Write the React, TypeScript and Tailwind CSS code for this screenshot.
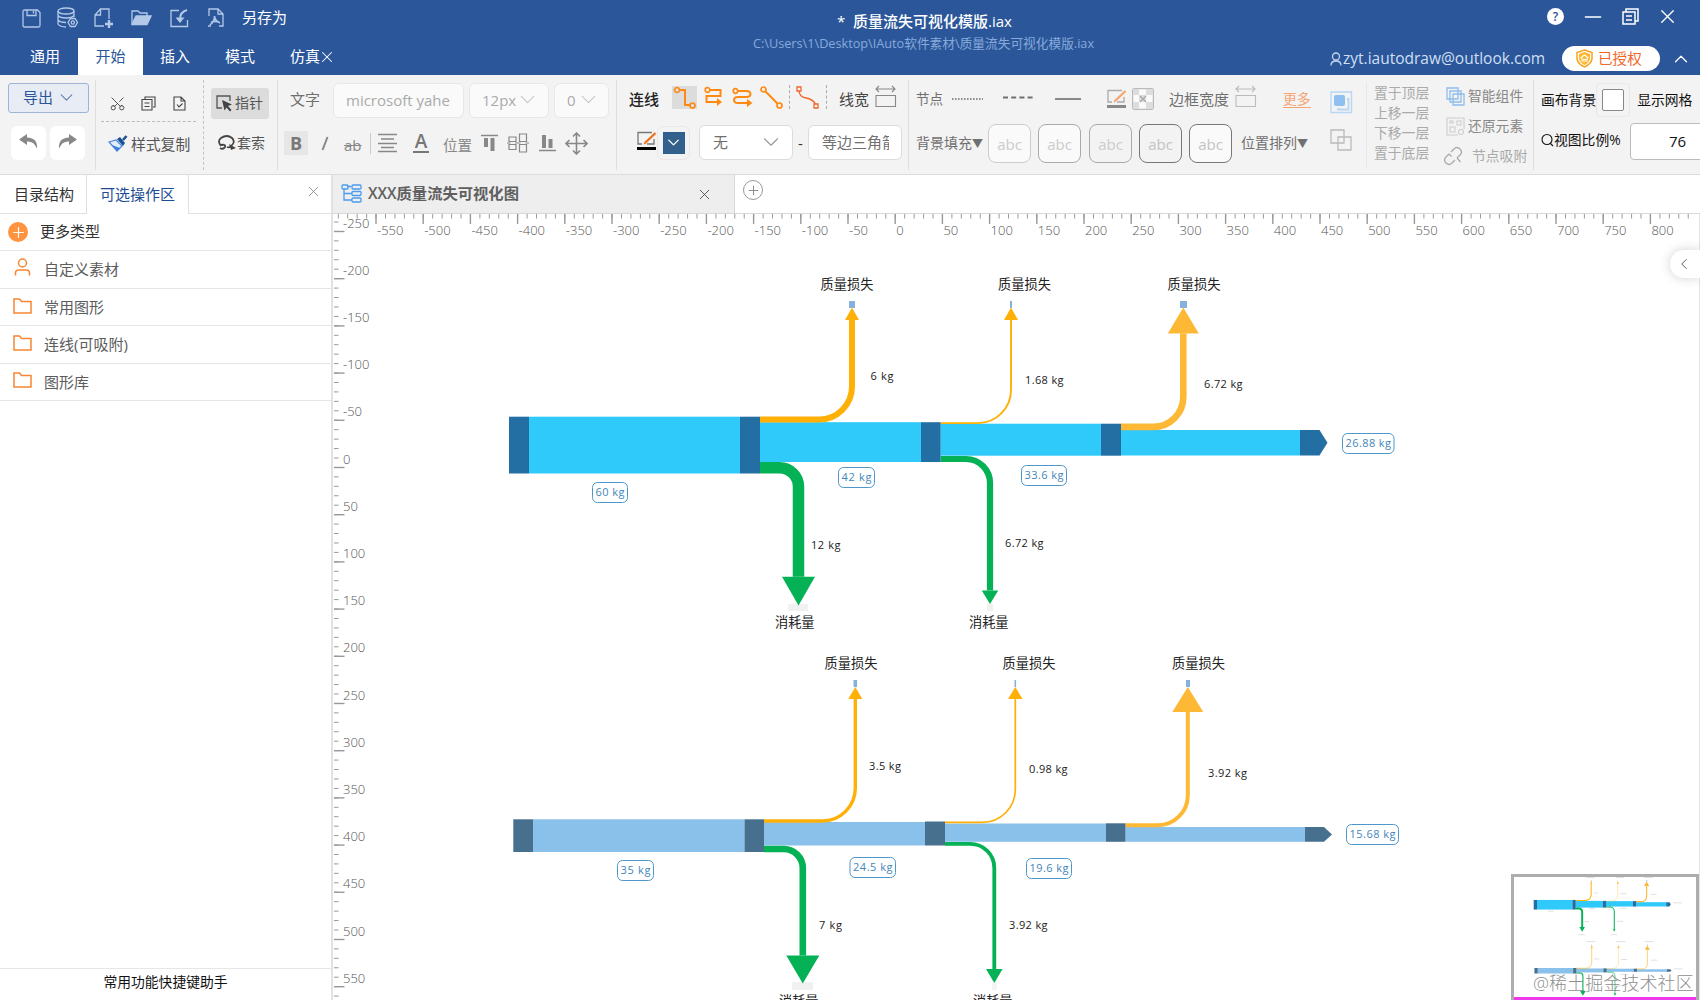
import type { ReactNode } from "react";
import { ChevronDown, ChevronLeft, ChevronUp, Minus, Plus, Scissors, X } from "lucide-react";

interface Stream {
  x: number; // where the stream leaves the bar
  y: number;
  bendX: number;
  radius: number;
  tip: number;
  base: number;
  width: number;
  head: number;
  color: string;
}

interface Label {
  x: number;
  y: number;
  w: number;
  text: string;
}

interface FlowData {
  light: string;
  dark: string;
  bars: number[][];
  nodes: number[][];
  end: string;
  streams: Stream[];
  stubs: number[][];
  titles: Label[];
  values: Label[];
  boxes: Label[];
}

const flows: FlowData[] = [
  {
    light: "#2fc9fa",
    dark: "#236ea3",
    bars: [
      [529, 416.7, 211, 56.8],
      [760, 422.2, 161, 39.8],
      [940.5, 423.7, 160.5, 32],
      [1121, 430, 179, 25.5],
    ],
    nodes: [
      [509, 416.7, 20, 56.8],
      [740, 416.7, 20, 56.8],
      [921, 422.2, 19.6, 39.8],
      [1101, 423.7, 20, 32],
    ],
    end: "M1300 430H1319.5L1327.5 442.7L1319.5 455.5H1300Z",
    streams: [
      { x: 760, y: 419.6, bendX: 852, radius: 33, tip: 307.5, base: 320, width: 6, head: 14, color: "#ffb007" },
      { x: 940.6, y: 423.1, bendX: 1011, radius: 33, tip: 307.5, base: 320, width: 1.9, head: 14, color: "#ffb007" },
      { x: 1121, y: 426.9, bendX: 1183.3, radius: 30, tip: 307.5, base: 333.5, width: 6.6, head: 31, color: "#fdb935" },
      { x: 760, y: 467.7, bendX: 798.5, radius: 19, tip: 605.5, base: 576.7, width: 11.5, head: 33, color: "#04b154" },
      { x: 940.6, y: 459, bendX: 990, radius: 24, tip: 604, base: 590.5, width: 6.2, head: 16.5, color: "#04b154" },
    ],
    stubs: [
      [849, 301, 6, 7],
      [1010, 301, 2, 7],
      [1180, 301, 7, 7],
    ],
    titles: [
      { x: 820.5, y: 284, w: 53, text: "质量损失" },
      { x: 998, y: 284, w: 53, text: "质量损失" },
      { x: 1167.5, y: 284, w: 53, text: "质量损失" },
      { x: 775, y: 622, w: 39.5, text: "消耗量" },
      { x: 969, y: 622, w: 39.5, text: "消耗量" },
    ],
    values: [
      { x: 870.5, y: 376, w: 23, text: "6 kg" },
      { x: 1025, y: 380, w: 38.5, text: "1.68 kg" },
      { x: 1204, y: 384, w: 38.5, text: "6.72 kg" },
      { x: 811, y: 545, w: 29.5, text: "12 kg" },
      { x: 1005, y: 543, w: 38.5, text: "6.72 kg" },
    ],
    boxes: [
      { x: 592.5, y: 482.5, w: 35, text: "60 kg" },
      { x: 838.5, y: 467.5, w: 36, text: "42 kg" },
      { x: 1021.5, y: 465.5, w: 45, text: "33.6 kg" },
      { x: 1342.5, y: 433.5, w: 51.5, text: "26.88 kg" },
    ],
  },
  {
    light: "#8ac1ea",
    dark: "#47708f",
    bars: [
      [533, 819.3, 211.5, 32.7],
      [764, 822, 161, 23.5],
      [945, 823.5, 161, 18.3],
      [1125.5, 827, 179.5, 14.8],
    ],
    nodes: [
      [513.3, 819.3, 19.7, 32.7],
      [744.5, 819.3, 19.5, 32.7],
      [925, 821.5, 20, 24],
      [1106, 823.3, 19.5, 18.5],
    ],
    end: "M1305 827H1324L1332 834.4L1324 841.8H1305Z",
    streams: [
      { x: 764, y: 821, bendX: 855.3, radius: 33, tip: 687, base: 699, width: 3.4, head: 14, color: "#ffb007" },
      { x: 945, y: 822.4, bendX: 1015.3, radius: 33, tip: 687, base: 699, width: 1.7, head: 14.5, color: "#ffb007" },
      { x: 1125.5, y: 825.2, bendX: 1187.8, radius: 30, tip: 687, base: 712, width: 4, head: 31, color: "#fdb935" },
      { x: 764, y: 849, bendX: 802.8, radius: 19, tip: 983.5, base: 955.5, width: 6.6, head: 33, color: "#04b154" },
      { x: 945, y: 843.9, bendX: 994.3, radius: 24, tip: 983, base: 969, width: 3.8, head: 16.5, color: "#04b154" },
    ],
    stubs: [
      [853.5, 680, 3.6, 7],
      [1014.5, 680, 1.6, 7],
      [1186, 680, 4, 7],
    ],
    titles: [
      { x: 824.5, y: 663, w: 53, text: "质量损失" },
      { x: 1002.5, y: 663, w: 53, text: "质量损失" },
      { x: 1172, y: 663, w: 53, text: "质量损失" },
      { x: 779, y: 1001, w: 39.5, text: "消耗量" },
      { x: 973, y: 1001, w: 39.5, text: "消耗量" },
    ],
    values: [
      { x: 869, y: 766, w: 32, text: "3.5 kg" },
      { x: 1029, y: 769, w: 38.5, text: "0.98 kg" },
      { x: 1208, y: 773, w: 39, text: "3.92 kg" },
      { x: 819, y: 925, w: 23, text: "7 kg" },
      { x: 1009, y: 925, w: 38.5, text: "3.92 kg" },
    ],
    boxes: [
      { x: 617.5, y: 860.5, w: 36, text: "35 kg" },
      { x: 850, y: 857.5, w: 45.5, text: "24.5 kg" },
      { x: 1026.5, y: 858.5, w: 45, text: "19.6 kg" },
      { x: 1346.5, y: 824.5, w: 52, text: "15.68 kg" },
    ],
  },
];

function streamPath(s: Stream) {
  const down = s.tip > s.y;
  const endY = down ? s.y + s.radius : s.y - s.radius;
  return `M${s.x} ${s.y}H${s.bendX - s.radius}A${s.radius} ${s.radius} 0 0 ${down ? 1 : 0} ${s.bendX} ${endY}V${s.base}`;
}

function FlowShapes({ flow }: { flow: FlowData }) {
  return (
    <g>
      {flow.bars.map(([x, y, w, h]) => (
        <rect key={x} x={x} y={y} width={w} height={h} fill={flow.light} />
      ))}
      {flow.stubs.map(([x, y, w, h]) => (
        <rect key={x} x={x} y={y} width={w} height={h} fill="#86b1de" />
      ))}
      {flow.streams.map((s) => (
        <g key={s.bendX}>
          <path d={streamPath(s)} fill="none" stroke={s.color} strokeWidth={s.width} />
          <path d={`M${s.bendX - s.head / 2} ${s.base}H${s.bendX + s.head / 2}L${s.bendX} ${s.tip}Z`} fill={s.color} />
        </g>
      ))}
      {flow.nodes.map(([x, y, w, h]) => (
        <rect key={x} x={x} y={y} width={w} height={h} fill={flow.dark} />
      ))}
      <path d={flow.end} fill={flow.dark} />
    </g>
  );
}

function FlowLabels({ flow }: { flow: FlowData }) {
  return (
    <g>
      {flow.titles.map((t) => (
        <text key={t.x} x={t.x} y={t.y + 5} textLength={t.w} fontSize="13.2" fill="#222">
          {t.text}
        </text>
      ))}
      {flow.values.map((t) => (
        <text key={t.x} x={t.x} y={t.y + 4} textLength={t.w} fontSize="11" fill="#222">
          {t.text}
        </text>
      ))}
      {flow.boxes.map((t) => (
        <g key={t.x}>
          <rect x={t.x} y={t.y} width={t.w} height="20" rx="5" fill="#fff" stroke="#4e97cb" />
          <text x={t.x + 3} y={t.y + 13.5} textLength={t.w - 6} fontSize="11" fill="#3f86bb">
            {t.text}
          </text>
        </g>
      ))}
    </g>
  );
}

const STEP = 47.2;

function Rulers() {
  const minorX = Array.from({ length: 144 }, (_, i) => 338.3 + i * (STEP / 5));
  const minorY = Array.from({ length: 83 }, (_, i) => 222 + i * (STEP / 5));
  return (
    <g stroke="#999" strokeWidth="1">
      {minorX.map((x) => (
        <path key={x} d={`M${x} 214V218.5`} />
      ))}
      {minorY.map((y) => (
        <path key={y} d={`M334 ${y}H338.5`} />
      ))}
      {Array.from({ length: 28 }, (_, i) => (
        <g key={i}>
          <path strokeWidth="1.4" d={`M${376 + i * STEP} 214V224`} />
          <text x={377 + i * STEP} y="234.5" fontSize="13" fontWeight="300" fill="#555" stroke="none">
            {-550 + i * 50}
          </text>
        </g>
      ))}
      {Array.from({ length: 17 }, (_, i) => (
        <g key={i}>
          <path strokeWidth="1.4" d={`M334 ${231.5 + i * STEP}H344.5`} />
          <text x="343" y={227.5 + i * STEP} fontSize="13" fontWeight="300" fill="#555" stroke="none">
            {-250 + i * 50}
          </text>
        </g>
      ))}
    </g>
  );
}

function Canvas() {
  return (
    <div className="relative h-[786px] w-[1367px] overflow-hidden bg-white">
      <svg className="block" width="1367" height="786" viewBox="333 214 1367 786">
        <rect x="788" y="604" width="20" height="7" fill="#f1f1f1" />
        <rect x="987" y="604" width="6" height="7" fill="#f1f1ee" />
        <rect x="792" y="982" width="21" height="8" fill="#f1f1f1" />
        <rect x="992" y="983" width="5" height="7" fill="#f4f4f2" />
        <Rulers />
        {flows.map((flow) => (
          <g key={flow.light}>
            <FlowShapes flow={flow} />
            <FlowLabels flow={flow} />
          </g>
        ))}
        <path d="M1699.5 214V1000" stroke="#e4e4e4" />
      </svg>
      <div className="absolute top-[36px] right-0 flex h-[28px] w-[30px] items-center justify-center rounded-l-full bg-white shadow-[0_0_12px_rgba(0,0,0,0.18)]">
        <ChevronLeft size={18} className="-ml-[3px] text-[#555]" strokeWidth={1.3} />
      </div>
      <MiniMap />
    </div>
  );
}

function MiniMap() {
  return (
    <div className="absolute right-px bottom-0 h-[126px] w-[188px] border-[3px] border-b-0 border-[#adadad] bg-white">
      <svg width="182" height="123" viewBox="1514 877 182 123" className="block">
        <g transform="translate(1533.7 900) scale(0.1675 0.169) translate(-509 -417)">
          {flows.map((flow) => (
            <g key={flow.light}>
              <FlowShapes flow={flow} />
              {[...flow.titles, ...flow.values, ...flow.boxes].map((t) => (
                <rect key={`${t.x}-${t.y}`} x={t.x} y={t.y - 3} width={t.w} height="6" fill="#000" opacity="0.12" />
              ))}
            </g>
          ))}
        </g>
        <path d="M1514 998.5H1696" stroke="#ee3aea" strokeWidth="3" />
      </svg>
      <span className="absolute top-[93px] left-[19px] text-[18.1px] leading-[26px] font-light whitespace-nowrap text-[#808080]/90">
        @稀土掘金技术社区
      </span>
    </div>
  );
}

function Svg({ w, h, className = "", children }: { w: number; h: number; className?: string; children: ReactNode }) {
  return (
    <svg
      width={w}
      height={h}
      viewBox={`0 0 ${w} ${h}`}
      fill="none"
      stroke="currentColor"
      strokeWidth="1.3"
      className={`shrink-0 ${className}`}
    >
      {children}
    </svg>
  );
}

function QuickIcons() {
  return (
    <div className="flex h-[36px] items-center pl-[22px] text-[#b4c9e8]">
      <Svg w={19} h={19}>
        <path d="M1 2.5Q1 1 2.5 1H15.5L18 3.5V16.5Q18 18 16.5 18H2.5Q1 18 1 16.5ZM5 1V6.5H14V1M11.5 2V4.5" />
      </Svg>
      <Svg w={22} h={22} className="ml-[16px]">
        <ellipse cx="9" cy="4" rx="8" ry="3" />
        <path d="M1 4V17Q3 20 9 20M17 4V10M1 8.5Q3 11 9 11T17 8.5M1 13Q3 15.5 9 15.5" />
        <path d="M13.5 11.5H18L20.5 15.5L18 19.5H13.5L11 15.5Z" />
        <circle cx="15.8" cy="15.5" r="1.6" />
      </Svg>
      <Svg w={20} h={20} className="ml-[15px]">
        <path d="M10 18H1V7L6.5 1H15V11M6.5 1V7H1" />
        <path d="M15 12V20M11 16H19" strokeWidth="2.4" />
      </Svg>
      <Svg w={21} h={16} className="ml-[17px]">
        <path d="M1 14V1H7L9 3H16V6" />
        <path d="M1 14.5L5 6H20L16 14.5Z" fill="currentColor" />
      </Svg>
      <Svg w={19} h={19} className="ml-[18px]">
        <path d="M9 1.5H1V17.5H17.5V11" />
        <path d="M17 1Q10 3 10 10" strokeWidth="2" />
        <path d="M5.5 8.5L10 14L14.5 8.5Z" fill="currentColor" stroke="none" />
      </Svg>
      <Svg w={18} h={20} className="ml-[18px]">
        <path d="M2 8V1H11L16 6V18H12M11 1V6H16M1 18H4" />
        <path d="M7.5 8Q8 13 3 17M7.5 8Q8 13 13 15M4 14.5Q8 12.5 12 14" strokeWidth="1.6" />
      </Svg>
      <span className="ml-[17px] pb-[2px] text-[15px] text-white">另存为</span>
    </div>
  );
}

function Header() {
  return (
    <header className="flex h-[75px] bg-[#2b579a] text-[15px] text-white">
      <div className="w-[517px]">
        <QuickIcons />
        <nav className="flex h-[39px] items-end leading-[37px]">
          <span className="ml-[30px]">通用</span>
          <span className="ml-[18px] h-[37px] w-[65px] bg-white text-center text-[#2b579a]">开始</span>
          <span className="ml-[17px]">插入</span>
          <span className="ml-[35px]">模式</span>
          <span className="ml-[35px] flex items-center">
            仿真
            <X size={18} strokeWidth={1.4} className="-ml-[2px]" />
          </span>
        </nav>
      </div>
      <div className="flex w-[813px] flex-col items-center pt-[10px]">
        <span className="ml-[2px] text-[15px] leading-[22px] font-medium whitespace-pre">*&nbsp; 质量流失可视化模版.iax</span>
        <span className="text-[12.7px] leading-[22px] text-[#88aada]">C:\Users\1\Desktop\IAuto软件素材\质量流失可视化模版.iax</span>
      </div>
      <div className="flex-1">
        <div className="flex h-[33px] items-center pl-[217px]">
          <span className="flex size-[17px] items-center justify-center rounded-full bg-white text-[12px] font-semibold text-[#2b579a]">
            ?
          </span>
          <Minus size={26} strokeWidth={1.4} className="ml-[16px]" />
          <Svg w={17} h={17} className="ml-[16px]">
            <path d="M4 4V1H16V13H13M1 4H13V16H1ZM4 8H10M4 12H10" strokeWidth="1.5" />
          </Svg>
          <X size={23} strokeWidth={1.4} className="ml-[17px]" />
        </div>
        <div className="flex h-[51px] items-center">
          <Svg w={12} h={14} className="text-[#c4d6ef]">
            <circle cx="6" cy="4.5" r="3.5" />
            <path d="M1 13.5Q1 9 6 9T11 13.5" />
          </Svg>
          <span className="ml-px w-[204px] text-[15.5px] whitespace-nowrap text-[#cfdff4]">zyt.iautodraw@outlook.com</span>
          <span className="ml-[15px] flex h-[25px] w-[98px] items-center rounded-full bg-white pl-[14px] text-[#f0682c]">
            <Svg w={17} h={19}>
              <path d="M8.5 1L16 3.5V10Q15 15 8.5 18Q2 15 1 10V3.5Z" fill="#fff" stroke="#f9a41c" strokeWidth="1.5" />
              <path d="M8.5 3L14 5V10Q13 13.5 8.5 16Q4 13.5 3 10V5Z" fill="#ffb52e" stroke="none" />
              <path d="M4.5 9L8.5 6L12.5 9M6 9V12H11V9M7 10.5H10" stroke="#fff" strokeWidth="1.1" />
            </Svg>
            <span className="ml-[5px] text-[14.6px]">已授权</span>
          </span>
          <ChevronUp size={22} strokeWidth={1.4} className="ml-[10px]" />
        </div>
      </div>
    </header>
  );
}

function Pencil({ color, bar, line }: { color: string; bar: string; line: string }) {
  return (
    <Svg w={20} h={20}>
      <path d="M15 1.5H1V13H5M17 8V13H10" stroke={line} />
      <path d="M8.5 11.5L18.5 2" stroke={color} strokeWidth="2.4" />
      <path d="M6.5 13.5L7.5 10.5L9.5 12.5Z" fill={color} stroke="none" />
      <path d="M0 17.5H19" stroke={bar} strokeWidth="3" />
    </Svg>
  );
}

function WidthIcon() {
  return (
    <Svg w={22} h={23}>
      <path d="M1 4H20M4 1L1 4L4 7M17 1L20 4L17 7M1 10.5H20.5V21.5H1Z" strokeWidth="1.1" />
    </Svg>
  );
}

function LineIcons() {
  return (
    <>
      <span className="-mt-[3px] ml-[13px] flex h-[23px] w-[25px] items-center justify-center bg-[#dcdcdc]">
        <Svg w={23} h={23}>
          <path d="M6 4H12V19H17" strokeWidth="2" />
          <circle cx="4" cy="4" r="2.5" strokeWidth="1.7" />
          <circle cx="19.5" cy="19.5" r="2.5" strokeWidth="1.7" />
        </Svg>
      </span>
      <Svg w={20} h={20} className="-mt-[5px] ml-[7px]">
        <path d="M6 4H16.5V10H2.5V16H14" strokeWidth="2" />
        <circle cx="3.5" cy="4" r="2.3" strokeWidth="1.7" />
        <path d="M13 12L18 16L13 20Z" fill="currentColor" stroke="none" />
      </Svg>
      <Svg w={21} h={20} className="-mt-[4px] ml-[8px]">
        <path d="M6 4H14Q18.5 4 18.5 7T14 10H6Q2 10 2 13T6 16H15" strokeWidth="2" />
        <circle cx="3.5" cy="4" r="2.3" strokeWidth="1.7" />
        <path d="M15 12L20.5 16L15 20Z" fill="currentColor" stroke="none" />
      </Svg>
      <Svg w={23} h={23} className="-mt-[3px] ml-[7px]">
        <path d="M5 5L18 18" strokeWidth="2" />
        <circle cx="3.5" cy="3.5" r="2.5" strokeWidth="1.7" />
        <circle cx="19.5" cy="19.5" r="2.5" strokeWidth="1.7" />
      </Svg>
      <span className="-mt-[3px] ml-[6px] h-[24px] border-l border-dashed border-[#aaa]" />
      <Svg w={23} h={23} className="-mt-[3px] ml-[6px] text-[#f0682c]">
        <path d="M3 4Q3 11 10 12T20 19" />
        <path d="M1 1H5V5H1ZM18 18H22V22H18Z" fill="#f3f3f3" />
      </Svg>
    </>
  );
}

function Divider() {
  return <span className="mt-[5px] h-[90px] w-px shrink-0 bg-[#dedede]" />;
}

function Toolbar() {
  return (
    <div className="flex h-[100px] overflow-hidden border-b border-[#dcdcdc] bg-[#f3f3f3] text-[15px] leading-[20px] whitespace-nowrap text-[#707070]">
      <div className="w-[95px] shrink-0 pt-[8px] pl-[8px]">
        <button className="flex h-[30px] w-[81px] items-center rounded-[3px] border border-[#9fb2d8] bg-[#e7ecf5] pb-[2px] pl-[14px] text-[#2b579a]">
          导出
          <ChevronDown size={21} strokeWidth={1.2} className="ml-[3px] text-[#5c7db3]" />
        </button>
        <div className="mt-[13px] flex gap-[4px] pl-[3px] text-[#888]">
          <span className="flex h-[34px] w-[35px] items-center justify-center rounded-md bg-white pb-[4px]">
            <Svg w={19} h={17}>
              <path d="M8 1L0 6.5L8 12V8.5Q15 8 18 15.5Q19 5 8 4.5Z" fill="currentColor" stroke="none" />
            </Svg>
          </span>
          <span className="flex h-[34px] w-[35px] items-center justify-center rounded-md bg-white pb-[4px]">
            <Svg w={19} h={17}>
              <path d="M11 1L19 6.5L11 12V8.5Q4 8 1 15.5Q0 5 11 4.5Z" fill="currentColor" stroke="none" />
            </Svg>
          </span>
        </div>
      </div>
      <Divider />
      <div className="w-[107px] shrink-0">
        <div className="ml-[5px] flex h-[47px] w-[95px] items-center border-b border-dashed border-[#bbb] pt-[11px] pl-[8px] text-[#444]">
          <Scissors size={17} strokeWidth={1.3} className="-rotate-90" />
          <Svg w={15} h={15} className="ml-[15px]">
            <path d="M4 3V1H14V11H12M1 3.5H11V14H1ZM3.5 7H8.5M3.5 10.5H8.5" strokeWidth="1.1" />
          </Svg>
          <Svg w={13} h={15} className="ml-[17px]">
            <path d="M1 1H8L12 5V14H1ZM8 1V5H12M4 8.5L6 11L9.5 7.5" strokeWidth="1.1" />
          </Svg>
        </div>
        <div className="mt-[11px] flex h-[22px] items-center pl-[12px]">
          <Svg w={20} h={18}>
            <path d="M1 7L8 5L14 11L9 16Z" fill="#e3eefc" stroke="#4a86dd" />
            <path d="M4 10L9 16L12 13Z" fill="#3f7ee0" stroke="none" />
            <path d="M9 4L12 2L17 8L15 11Z" fill="#1d4f93" stroke="none" />
            <path d="M15 5L18.5 1" stroke="#1d4f93" strokeWidth="2.5" />
          </Svg>
          <span className="ml-[3px] text-[14.8px] text-[#555]">样式复制</span>
        </div>
      </div>
      <span className="mt-[5px] h-[90px] border-l border-dashed border-[#c4c4c4]" />
      <div className="w-[73px] shrink-0 pt-[13px] pl-[7px] text-[14px]">
        <div className="flex h-[31px] w-[58px] items-center rounded-[3px] bg-[#dcdcdc] pl-[5px] text-[#555]">
          <Svg w={17} h={17}>
            <path d="M6 13H1V1H14V6" />
            <path d="M6 5L16 9.5L12 11L15.5 15L14 16.5L10.5 12.5L8.5 15.5Z" fill="#444" stroke="none" />
          </Svg>
          <span className="ml-[2px] pb-px">指针</span>
        </div>
        <div className="mt-[13px] flex h-[22px] items-center pl-[6px] text-[#444]">
          <Svg w={20} h={16}>
            <path d="M4 11Q0 6 4 3Q10 -1 15 3Q19 7 14 11M4 10Q9 9 8 12Q6 15 3 13M15 11Q12 13 10 12" strokeWidth="1.8" />
            <path d="M12 9L19 13L14 15Z" fill="currentColor" stroke="none" />
          </Svg>
          <span className="text-[#555]">套索</span>
        </div>
      </div>
      <Divider />
      <div className="w-[338px] shrink-0">
        <div className="flex pt-[8px] pl-[12px]">
          <span className="w-[43px] pt-[6px]">文字</span>
          <span className="h-[35px] w-[131px] rounded-md border border-[#e8e8e8] bg-[#fafafa] pl-[12px] leading-[32px] text-[#aaa]">
            <span className="block w-[105px] overflow-hidden">microsoft yahei</span>
          </span>
          <span className="ml-[5px] flex h-[35px] w-[80px] items-center rounded-md border border-[#e8e8e8] bg-[#fafafa] pb-[2px] pl-[12px] text-[#aaa]">
            12px
            <ChevronDown size={25} strokeWidth={1} className="-ml-px text-[#c4c4c4]" />
          </span>
          <span className="ml-[5px] flex h-[35px] w-[55px] items-center rounded-md border border-[#e8e8e8] bg-[#fafafa] pb-[2px] pl-[12px] text-[#aaa]">
            0
            <ChevronDown size={25} strokeWidth={1} className="text-[#c4c4c4]" />
          </span>
        </div>
        <div className="mt-[13px] flex h-[24px] items-center pl-[6px] text-[#888]">
          <span className="size-[24px] bg-[#e6e6e6] text-center text-[18px] leading-[24px] font-bold text-[#777]">B</span>
          <Svg w={8} h={15} className="ml-[13px]">
            <path d="M6.5 1L1.5 14" strokeWidth="2" />
          </Svg>
          <span className="ml-[15px] w-[18px] pt-[3px] text-[15px] line-through">ab</span>
          <span className="ml-[8px] h-[21px] w-px bg-[#ccc]" />
          <Svg w={19} h={20} className="ml-[7px]">
            <path d="M0 1.5H19M3 6H16M0 10.5H19M3 14.5H16M0 18.5H19" strokeWidth="1.6" />
          </Svg>
          <span className="ml-[16px] h-[20px] w-[16px] border-b-2 border-[#777] text-center text-[19px] leading-[16px] font-semibold text-[#777]">
            A
          </span>
          <span className="ml-[14px] pt-[3px] text-[14.6px]">位置</span>
          <Svg w={17} h={18} className="ml-[9px]">
            <path d="M0 1.5H17" strokeWidth="1.5" />
            <path d="M5 4V13M11.5 4V17" strokeWidth="4" />
          </Svg>
          <Svg w={22} h={20} className="ml-[9px]">
            <path d="M2 4H9V8.5H2ZM2 11.5H9V16.5H2ZM12.5 1H19.5V8.5H12.5ZM12.5 11.5H19.5V19H12.5ZM0 10H3.5M8 10H13.5M18.5 10H22" strokeWidth="1.2" />
          </Svg>
          <Svg w={17} h={18} className="ml-[10px]">
            <path d="M0 16.5H17" strokeWidth="1.5" />
            <path d="M5 1V14M11.5 5V14" strokeWidth="4" />
          </Svg>
          <Svg w={23} h={23} className="ml-[9px]">
            <path d="M11.5 1V22M1 11.5H22M8 4.5L11.5 1L15 4.5M8 18.5L11.5 22L15 18.5M4.5 8L1 11.5L4.5 15M18.5 8L22 11.5L18.5 15" strokeWidth="1.6" />
          </Svg>
        </div>
      </div>
      <Divider />
      <div className="w-[291px] shrink-0">
        <div className="flex h-[43px] items-center pt-[4px] pl-[12px] text-[#ff8a12]">
          <span className="font-medium text-[#222]">连线</span>
          <LineIcons />
          <span className="-mt-[3px] ml-[7px] h-[24px] border-l border-dashed border-[#aaa]" />
          <span className="ml-[12px] text-[#444]">线宽</span>
          <span className="-mt-[5px] ml-[6px] text-[#888]">
            <WidthIcon />
          </span>
        </div>
        <div className="mt-[7px] flex h-[35px] items-center pl-[20px]">
          <span className="-mt-[4px]">
            <Pencil color="#f0711f" bar="#000" line="#777" />
          </span>
          <span className="flex h-[34px] w-[33px] items-center justify-center rounded-md border border-[#e8e8e8]">
            <span className="flex size-[22px] items-center justify-center border border-[#2a5f92] bg-[#34618b] text-white">
              <ChevronDown size={19} strokeWidth={1.6} className="shrink-0" />
            </span>
          </span>
          <span className="ml-[9px] flex h-[35px] w-[94px] items-center rounded-md border border-[#dcdcdc] bg-white pb-px pl-[13px]">
            无
            <ChevronDown size={26} strokeWidth={1} className="ml-[30px] text-[#999]" />
          </span>
          <span className="w-[15px] text-center text-[#333]">-</span>
          <span className="h-[35px] w-[94px] rounded-md border border-[#dcdcdc] bg-white pl-[13px] leading-[32px]">
            <span className="block w-[67px] overflow-hidden">等边三角箭头</span>
          </span>
        </div>
      </div>
      <Divider />
      <div className="w-[412px] shrink-0 text-[14px]">
        <div className="flex h-[43px] items-center pt-[4px] pl-[7px]">
          <span className="text-[13.5px]">节点</span>
          <Svg w={31} h={2} className="ml-[9px]">
            <path d="M0 1H31" strokeWidth="1.5" strokeDasharray="1.6 1.4" />
          </Svg>
          <Svg w={30} h={3} className="-mt-[2px] ml-[20px]">
            <path d="M0 1.5H30" strokeWidth="2" strokeDasharray="5 3.2" />
          </Svg>
          <span className="ml-[22px] h-[2px] w-[26px] bg-[#888]" />
          <span className="ml-[26px]">
            <Pencil color="#f5a76f" bar="#888" line="#aaa" />
          </span>
          <Svg w={22} h={22} className="ml-[5px] text-[#bbb]">
            <rect x="0.6" y="0.6" width="20.8" height="20.8" rx="2" fill="#fafafa" />
            <path d="M1 1H7V7H1ZM14 1H21V7H14ZM7 7H14V14H7ZM1 14H7V21H1ZM14 14H21V21H14Z" fill="#ddd" stroke="none" />
            <path d="M8 8L14 14M14 8L8 14" stroke="#aaa" />
          </Svg>
          <span className="ml-[15px] pt-px text-[15px]">边框宽度</span>
          <span className="-mt-[4px] ml-[6px] text-[#bbb]">
            <WidthIcon />
          </span>
          <span className="ml-[26px] border-b border-[#f3a673] text-[13.8px] leading-[17px] text-[#f3a673]">更多</span>
        </div>
        <div className="mt-[6px] flex h-[39px] items-center pl-[7px]">
          <span className="w-[72px] pb-px">
            背景填充<span className="text-[11px]">▼</span>
          </span>
          <span className="h-[39px] w-[43px] rounded-lg border border-[#ccc] bg-[#fafafa] text-center text-[15px] leading-[38px] text-[#ccc]">abc</span>
          <span className="ml-[7px] h-[39px] w-[43px] rounded-lg border border-[#aaa] bg-[#fafafa] text-center text-[15px] leading-[38px] text-[#ccc]">abc</span>
          <span className="ml-[8px] h-[39px] w-[43px] rounded-lg border border-[#aaa] text-center text-[15px] leading-[38px] text-[#ccc]">abc</span>
          <span className="ml-[7px] h-[39px] w-[43px] rounded-lg border border-[#777] text-center text-[15px] leading-[38px] text-[#c4c4c4]">abc</span>
          <span className="ml-[7px] h-[39px] w-[43px] rounded-lg border border-[#777] bg-[#fafafa] text-center text-[15px] leading-[38px] text-[#c4c4c4]">abc</span>
          <span className="ml-[9px]">
            位置排列<span className="text-[11px]">▼</span>
          </span>
        </div>
      </div>
      <div className="w-[45px] shrink-0 pt-[16px] pl-[9px] text-[#bbb]">
        <Svg w={23} h={23} className="text-[#b8d7f4]">
          <path d="M1 1H21.5V21.5H1Z" />
          <rect x="4" y="4" width="11" height="11" rx="2" fill="#8fc0ef" stroke="none" />
          <path d="M17 8H18.5V18.5H8V17" strokeWidth="1.8" />
        </Svg>
        <Svg w={23} h={23} className="mt-[15px]">
          <path d="M1 1H14V14H1ZM8 8H21V21H8Z" />
        </Svg>
      </div>
      <span className="mt-[8px] h-[85px] w-px shrink-0 bg-[#e8e8e8]" />
      <div className="w-[69px] shrink-0 pt-[8px] pl-[7px] text-[13.8px] text-[#aaa]">
        <p>置于顶层</p>
        <p>上移一层</p>
        <p>下移一层</p>
        <p>置于底层</p>
      </div>
      <div className="w-[97px] shrink-0 pt-[6px] pl-[10px] text-[13.8px] text-[#888]">
        <div className="flex h-[30px] items-center">
          <Svg w={19} h={19} className="text-[#8fbdec]">
            <path d="M1 1H12V12H1ZM4 4H15V15H4ZM7 7H18V18H7Z" />
          </Svg>
          <span className="ml-[3px]">智能组件</span>
        </div>
        <div className="flex h-[30px] items-center">
          <Svg w={19} h={19} className="text-[#ccc]">
            <path d="M1 1H18V12M1 1V18H12M4 10H9V15H4ZM11 4H15V8H11ZM4 4H7V6H4Z" strokeWidth="1.1" />
            <circle cx="15" cy="15" r="2.5" strokeWidth="1.1" />
          </Svg>
          <span className="ml-[3px]">还原元素</span>
        </div>
        <div className="-ml-[3px] flex h-[30px] items-center text-[#aaa]">
          <Svg w={20} h={20}>
            <path d="M8 6L11 3Q14 0 17 3T17 9L14 12M12 14L9 17Q6 20 3 17T3 11L6 8" />
            <path d="M6 8L8.5 10.5M14 12L17.5 16" />
          </Svg>
          <span className="ml-[9px]">节点吸附</span>
        </div>
      </div>
      <Divider />
      <div className="w-[168px] shrink-0 pt-[8px] pl-[7px] text-[13.8px] text-[#111]">
        <div className="flex h-[34px] items-center">
          <span className="pb-px">画布背景</span>
          <span className="flex size-[34px] items-center justify-center rounded border border-[#e8e8e8]">
            <span className="size-[22px] rounded-[2px] border border-[#888] bg-white" />
          </span>
          <span className="ml-[7px] pb-px">显示网格</span>
        </div>
        <div className="mt-[6px] flex items-center">
          <Svg w={13} h={14} className="-mt-[4px]">
            <circle cx="6" cy="6.5" r="5" strokeWidth="1.1" />
            <path d="M9 10L12 13" strokeWidth="1.1" />
          </Svg>
          <span className="w-[76px] shrink-0 pb-[4px]">视图比例%</span>
          <span className="h-[37px] w-[100px] shrink-0 rounded border border-[#bbb] bg-white pl-[38px] text-[15px] leading-[35px]">76</span>
        </div>
      </div>
    </div>
  );
}

function FolderIcon() {
  return (
    <Svg w={19} h={16} className="text-[#f58634]">
      <path d="M1 1H6.5L8.5 3.5H18V15H1Z" strokeWidth="1.5" />
    </Svg>
  );
}

const folders = ["常用图形", "连线(可吸附)", "图形库"];

function SidePanel() {
  return (
    <aside className="flex h-[825px] w-[333px] flex-col border-r-2 border-[#e2e2e2] bg-white text-[15px] text-[#5c5c5c]">
      <div className="flex h-[39px] leading-[38px]">
        <span className="w-[87px] border-r border-b border-[#e0e0e0] pl-[14px] text-[#333]">目录结构</span>
        <span className="w-[102px] border-r border-[#e0e0e0] pl-[13px] text-[#1d4c94]">可选操作区</span>
        <span className="flex flex-1 items-center justify-end border-b border-[#e0e0e0] pr-[9px]">
          <X size={17} strokeWidth={1.1} className="-mt-[5px] text-[#777]" />
        </span>
      </div>
      <div className="flex h-[37px] items-center border-b border-[#e6e6e6] pl-[8px] text-[#333]">
        <span className="flex size-[20px] items-center justify-center rounded-full bg-[#ff9440]">
          <Plus size={17} strokeWidth={1.6} className="text-white" />
        </span>
        <span className="ml-[12px] pb-[2px]">更多类型</span>
      </div>
      <div className="flex h-[38px] items-center border-b border-[#e6e6e6] pl-[14px]">
        <Svg w={17} h={18} className="-mt-[5px] text-[#f58634]">
          <circle cx="8.5" cy="5" r="4" strokeWidth="1.5" />
          <path d="M1.5 17.5V15Q1.5 12 5 12H12Q15.5 12 15.5 15V17.5" strokeWidth="1.5" />
        </Svg>
        <span className="ml-[13px] pb-px">自定义素材</span>
      </div>
      {folders.map((name) => (
        <div key={name} className="flex h-[37.4px] items-center border-b border-[#e6e6e6] pl-[13px]">
          <span className="-mt-[3px]">
            <FolderIcon />
          </span>
          <span className="ml-[12px]">{name}</span>
        </div>
      ))}
      <div className="mt-auto h-[32px] border-t border-[#e6e6e6] text-center text-[13.8px] leading-[25px] text-[#111]">
        常用功能快捷键助手
      </div>
    </aside>
  );
}

function PageTabs() {
  return (
    <div className="flex h-[39px] border-b border-[#d8d8d8] bg-white">
      <div className="flex w-[402px] items-center border-r border-[#d8d8d8] bg-[#eee] pl-[8px]">
        <Svg w={21} h={19} className="-mt-[2px] text-[#4a9bf0]">
          <path d="M3 5V16H11M3 9.5H11M6 2.5H10" />
          <rect x="1" y="1" width="6" height="4" rx="1" />
          <rect x="11" y="1" width="9" height="4" rx="1" />
          <rect x="11" y="7.5" width="9" height="4" rx="1" />
          <rect x="11" y="14" width="9" height="4" rx="1" />
        </Svg>
        <span className="ml-[6px] pb-[2px] text-[15.3px] font-semibold text-[#606060]">XXX质量流失可视化图</span>
        <X size={17} strokeWidth={1.2} className="mr-[21px] ml-auto text-[#444]" />
      </div>
      <span className="mt-[5px] ml-[8px] flex size-[20px] items-center justify-center rounded-full border-[1.5px] border-[#999]">
        <Plus size={15} strokeWidth={1.5} className="shrink-0 text-[#888]" />
      </span>
    </div>
  );
}

export default function App() {
  return (
    <div className="h-[1000px] w-[1700px] overflow-hidden bg-white font-['Open_Sans','Noto_Sans_CJK_SC',sans-serif]">
      <Header />
      <Toolbar />
      <div className="flex">
        <SidePanel />
        <main className="w-[1367px]">
          <PageTabs />
          <Canvas />
        </main>
      </div>
    </div>
  );
}
